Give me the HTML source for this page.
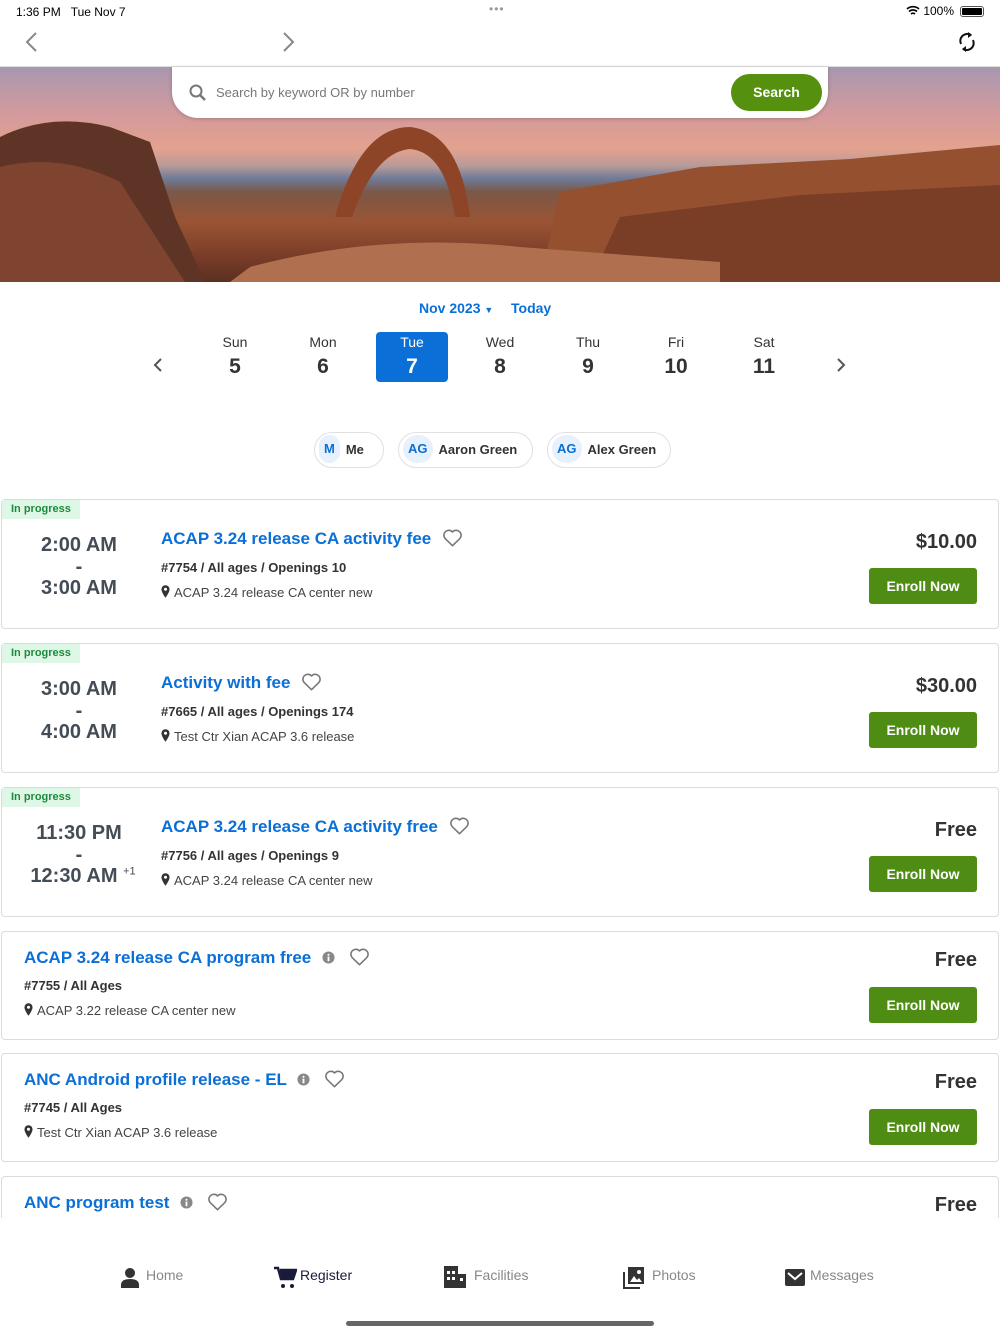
<!DOCTYPE html>
<html><head><meta charset="utf-8"><style>
*{margin:0;padding:0;box-sizing:border-box}
body{width:1000px;height:1334px;overflow:hidden;background:#fff;font-family:"Liberation Sans",sans-serif;position:relative;color:#333}
.a{position:absolute}
.card{position:absolute;left:1px;width:998px;border:1.5px solid #dcdcdc;border-radius:4px;background:#fff}
.tag{position:absolute;left:0;top:0;background:#dff7e6;color:#1e8a3c;font-size:11px;font-weight:600;padding:3px 9px 4px 9px}
.time{position:absolute;width:150px;text-align:center;font-size:20px;font-weight:bold;color:#444c55}
.title{position:absolute;font-size:17px;font-weight:bold;color:#0a6fd6;white-space:nowrap}
.title svg{vertical-align:-3px}
.meta{position:absolute;font-size:13px;font-weight:bold;color:#333;white-space:nowrap}
.loc{position:absolute;font-size:13px;color:#444;white-space:nowrap}
.loc svg{vertical-align:-1px;margin-right:4px}
.price{position:absolute;right:21px;font-size:20px;font-weight:bold;color:#333}
.btn{position:absolute;right:21px;width:108px;height:36px;background:#4e8c13;color:#fff;font-size:14px;font-weight:bold;text-align:center;line-height:36px;border-radius:3px}
.day{position:absolute;width:72px;text-align:center;color:#333}
.day .n{font-size:14px;display:block;margin-top:2px}
.day .d{font-size:21px;font-weight:bold;display:block;margin-top:5px}
.chip{position:absolute;top:432px;height:36px;border:1.5px solid #e0e0e0;border-radius:18px;font-size:13px;font-weight:bold;color:#333;line-height:33px;white-space:nowrap}
.chip b{display:inline-block;background:#e6f1fd;color:#0a6fd6;border-radius:14px;height:28px;line-height:28px;padding:0 5px;margin:2px 6px 0 4px;vertical-align:top}
.nav{position:absolute;top:1267px;font-size:14px;color:#888;white-space:nowrap}
</style></head><body>
<svg width="0" height="0" style="position:absolute"><defs>
<symbol id="heart" viewBox="0 0 24 22"><path d="M12 20.5L3.5 12.2A5.3 5.3 0 0 1 12 4.6a5.3 5.3 0 0 1 8.5 7.6z" stroke="#777" stroke-width="1.8" fill="none" stroke-linejoin="round"/></symbol>
<symbol id="info" viewBox="0 0 14 14"><circle cx="7" cy="7" r="6.5" fill="#888"/><rect x="6" y="6" width="2" height="5" fill="#fff"/><circle cx="7" cy="4" r="1.1" fill="#fff"/></symbol>
<symbol id="pin" viewBox="0 0 10 14"><path d="M5 0a4.5 4.5 0 0 0-4.5 4.5C.5 8 5 14 5 14s4.5-6 4.5-9.5A4.5 4.5 0 0 0 5 0z" fill="#333"/><circle cx="5" cy="4.5" r="1.7" fill="#fff"/></symbol>
</defs></svg>
<div class="a" style="left:16px;top:5px;font-size:12px;color:#000">1:36 PM&nbsp;&nbsp;&nbsp;Tue Nov 7</div>
<div class="a" style="left:489px;top:2px;font-size:12px;color:#999;letter-spacing:1px">•••</div>
<div class="a" style="left:906px;top:4px;font-size:12px;color:#000">
<svg width="14" height="11" viewBox="0 0 14 11" style="vertical-align:-1px"><path d="M1 4a9 9 0 0 1 12 0M3 6.5a6 6 0 0 1 8 0M5 9a3 3 0 0 1 4 0" stroke="#000" stroke-width="1.6" fill="none"/></svg> 100%</div>
<div class="a" style="left:960px;top:6px;width:24px;height:11px;border:1px solid #555;border-radius:3px;padding:1px"><div style="background:#000;width:100%;height:100%;border-radius:1px"></div></div>
<svg class="a" style="left:24px;top:32px" width="14" height="20"><path d="M12 1L3 10l9 9" stroke="#888" stroke-width="2" fill="none"/></svg>
<svg class="a" style="left:282px;top:32px" width="14" height="20"><path d="M2 1l9 9-9 9" stroke="#888" stroke-width="2" fill="none"/></svg>
<svg class="a" style="left:956px;top:30px" width="22" height="24"><path d="M5 14a7 7 0 0 1 10-9M17 10a7 7 0 0 1-10 9" stroke="#111" stroke-width="2" fill="none"/><path d="M12 2l4 3-4 3zM10 22l-4-3 4-3z" fill="#111"/></svg>
<div class="a" style="left:0;top:66px;width:1000px;height:1px;background:#ddd"></div>
<!-- hero -->
<div class="a" style="left:0;top:67px;width:1000px;height:215px;overflow:hidden;background:linear-gradient(180deg,#a898b0 0%,#d49a9c 22%,#e3a28e 38%,#b89a98 46%,#6e7a98 52%,#7a5848 58%,#9a5434 72%,#7a3c28 88%,#5a3020 100%)">
<svg width="1000" height="215" style="position:absolute;left:0;top:0">
<path d="M0 70 Q50 45 110 60 L150 75 L175 150 L205 215 L0 215Z" fill="#5e3426"/>
<path d="M0 100 Q60 85 120 115 L185 215 L0 215Z" fill="#7e4430"/>
<path d="M560 125 L700 100 L850 92 L1000 78 L1000 215 L540 215Z" fill="#94502f"/>
<path d="M620 150 L800 128 L1000 118 L1000 215 L590 215Z" fill="#7a3e26"/>
<path d="M250 200 Q380 165 520 180 L720 195 L720 215 L230 215Z" fill="#b07050"/>
<path d="M335 150 Q360 60 410 60 Q460 65 470 150 L455 150 Q445 85 410 82 Q375 85 352 150Z" fill="#8e4426"/>
</svg>
</div>
<div class="a" style="left:172px;top:67px;width:656px;height:51px;background:#fff;border-radius:0 0 26px 26px;box-shadow:0 1px 4px rgba(0,0,0,.2)"></div>
<svg class="a" style="left:189px;top:84px" width="18" height="18"><circle cx="7" cy="7" r="5.5" stroke="#777" stroke-width="2" fill="none"/><path d="M11 11l5 5" stroke="#777" stroke-width="2.5"/></svg>
<div class="a" style="left:216px;top:85px;font-size:13px;color:#777">Search by keyword OR by number</div>
<div class="a" style="left:731px;top:74px;width:91px;height:37px;background:#55910f;border-radius:19px;color:#fff;font-size:14px;font-weight:bold;text-align:center;line-height:37px">Search</div>
<!-- calendar -->
<div class="a" style="left:419px;top:300px;font-size:14px;font-weight:bold;color:#0a6fd6">Nov 2023 <span style="font-size:9px">▼</span></div>
<div class="a" style="left:511px;top:300px;font-size:14px;font-weight:bold;color:#0a6fd6">Today</div>
<svg class="a" style="left:153px;top:357px" width="10" height="16"><path d="M8 2L2 8l6 6" stroke="#555" stroke-width="2" fill="none"/></svg>
<svg class="a" style="left:836px;top:357px" width="10" height="16"><path d="M2 2l6 6-6 6" stroke="#555" stroke-width="2" fill="none"/></svg>
<div class="day" style="left:199px;top:332px"><span class="n">Sun</span><span class="d">5</span></div>
<div class="day" style="left:287px;top:332px"><span class="n">Mon</span><span class="d">6</span></div>
<div class="day" style="left:376px;top:332px;background:#0a6fd6;color:#fff;border-radius:4px;height:50px"><span class="n">Tue</span><span class="d">7</span></div>
<div class="day" style="left:464px;top:332px"><span class="n">Wed</span><span class="d">8</span></div>
<div class="day" style="left:552px;top:332px"><span class="n">Thu</span><span class="d">9</span></div>
<div class="day" style="left:640px;top:332px"><span class="n">Fri</span><span class="d">10</span></div>
<div class="day" style="left:728px;top:332px"><span class="n">Sat</span><span class="d">11</span></div>
<div class="chip" style="left:314px;width:70px"><b>M</b>Me</div>
<div class="chip" style="left:398px;width:135px"><b>AG</b>Aaron Green</div>
<div class="chip" style="left:547px;width:124px"><b>AG</b>Alex Green</div>

<!-- cards -->
<div class="card" style="top:499px;height:130px"><div class="tag">In progress</div>
<div class="time" style="left:2px;top:34px">2:00 AM</div><div class="time" style="left:2px;top:56px">-</div><div class="time" style="left:2px;top:77px">3:00 AM</div>
<div class="title" style="left:159px;top:28px">ACAP 3.24 release CA activity fee <svg width="21" height="19" style="margin-left:6px"><use href="#heart"/></svg></div>
<div class="meta" style="left:159px;top:60px">#7754 / All ages / Openings 10</div>
<div class="loc" style="left:159px;top:85px"><svg width="9" height="13"><use href="#pin"/></svg>ACAP 3.24 release CA center new</div>
<div class="price" style="top:31px">$10.00</div><div class="btn" style="top:68px">Enroll Now</div></div>

<div class="card" style="top:643px;height:130px"><div class="tag">In progress</div>
<div class="time" style="left:2px;top:34px">3:00 AM</div><div class="time" style="left:2px;top:56px">-</div><div class="time" style="left:2px;top:77px">4:00 AM</div>
<div class="title" style="left:159px;top:28px">Activity with fee <svg width="21" height="19" style="margin-left:6px"><use href="#heart"/></svg></div>
<div class="meta" style="left:159px;top:60px">#7665 / All ages / Openings 174</div>
<div class="loc" style="left:159px;top:85px"><svg width="9" height="13"><use href="#pin"/></svg>Test Ctr Xian ACAP 3.6 release</div>
<div class="price" style="top:31px">$30.00</div><div class="btn" style="top:68px">Enroll Now</div></div>

<div class="card" style="top:787px;height:130px"><div class="tag">In progress</div>
<div class="time" style="left:2px;top:34px">11:30 PM</div><div class="time" style="left:2px;top:56px">-</div><div class="time" style="left:6px;top:77px">12:30 AM <sup style="font-size:11px;font-weight:normal">+1</sup></div>
<div class="title" style="left:159px;top:28px">ACAP 3.24 release CA activity free <svg width="21" height="19" style="margin-left:6px"><use href="#heart"/></svg></div>
<div class="meta" style="left:159px;top:60px">#7756 / All ages / Openings 9</div>
<div class="loc" style="left:159px;top:85px"><svg width="9" height="13"><use href="#pin"/></svg>ACAP 3.24 release CA center new</div>
<div class="price" style="top:31px">Free</div><div class="btn" style="top:68px">Enroll Now</div></div>

<div class="card" style="top:931px;height:109px">
<div class="title" style="left:22px;top:15px">ACAP 3.24 release CA program free <svg width="13" height="13" style="margin-left:6px;vertical-align:-1px"><use href="#info"/></svg><svg width="21" height="19" style="margin-left:14px"><use href="#heart"/></svg></div>
<div class="meta" style="left:22px;top:46px">#7755 / All Ages</div>
<div class="loc" style="left:22px;top:71px"><svg width="9" height="13"><use href="#pin"/></svg>ACAP 3.22 release CA center new</div>
<div class="price" style="top:17px">Free</div><div class="btn" style="top:55px">Enroll Now</div></div>

<div class="card" style="top:1053px;height:109px">
<div class="title" style="left:22px;top:15px">ANC Android profile release - EL <svg width="13" height="13" style="margin-left:6px;vertical-align:-1px"><use href="#info"/></svg><svg width="21" height="19" style="margin-left:14px"><use href="#heart"/></svg></div>
<div class="meta" style="left:22px;top:46px">#7745 / All Ages</div>
<div class="loc" style="left:22px;top:71px"><svg width="9" height="13"><use href="#pin"/></svg>Test Ctr Xian ACAP 3.6 release</div>
<div class="price" style="top:17px">Free</div><div class="btn" style="top:55px">Enroll Now</div></div>

<div class="card" style="top:1176px;height:100px">
<div class="title" style="left:22px;top:15px">ANC program test <svg width="13" height="13" style="margin-left:6px;vertical-align:-1px"><use href="#info"/></svg><svg width="21" height="19" style="margin-left:14px"><use href="#heart"/></svg></div>
<div class="price" style="top:17px">Free</div></div>

<div class="a" style="left:0;top:1218px;width:1000px;height:116px;background:#fff"></div>
<svg class="a" style="left:120px;top:1267px" width="20" height="21"><circle cx="10" cy="6" r="5" fill="#333"/><path d="M1 21v-3q0-6 9-6t9 6v3z" fill="#333"/></svg>
<div class="nav" style="left:146px">Home</div>
<svg class="a" style="left:273px;top:1266px" width="24" height="23"><path d="M1 2h4l3 11h12l3-9H7" stroke="#1a1a3a" stroke-width="2.5" fill="none"/><path d="M7 5h15l-3 8H9z" fill="#1a1a3a"/><circle cx="10" cy="20" r="2" fill="#1a1a3a"/><circle cx="19" cy="20" r="2" fill="#1a1a3a"/></svg>
<div class="nav" style="left:300px;color:#1a1a3a">Register</div>
<svg class="a" style="left:444px;top:1266px" width="22" height="22"><path d="M0 0h14v22H0zM14 8h8v14h-8z" fill="#333"/><path d="M3 5h3v3H3zM8 5h3v3H8zM3 11h3v3H3zM8 11h3v3H8zM16 12h3v3h-3z" fill="#fff"/></svg>
<div class="nav" style="left:474px">Facilities</div>
<svg class="a" style="left:623px;top:1267px" width="22" height="22"><path d="M1 5v16h16" stroke="#333" stroke-width="2" fill="none"/><rect x="5" y="0" width="16" height="17" fill="#333"/><path d="M7 15l4-6 3 4 2-2 3 4z" fill="#fff"/><circle cx="16" cy="5" r="2" fill="#fff"/></svg>
<div class="nav" style="left:652px">Photos</div>
<svg class="a" style="left:785px;top:1269px" width="20" height="17"><rect width="20" height="17" rx="2" fill="#333"/><path d="M3 4l7 6 7-6" stroke="#fff" stroke-width="2" fill="none"/></svg>
<div class="nav" style="left:810px">Messages</div>
<div class="a" style="left:346px;top:1321px;width:308px;height:5px;background:#666;border-radius:3px"></div>
</body></html>
